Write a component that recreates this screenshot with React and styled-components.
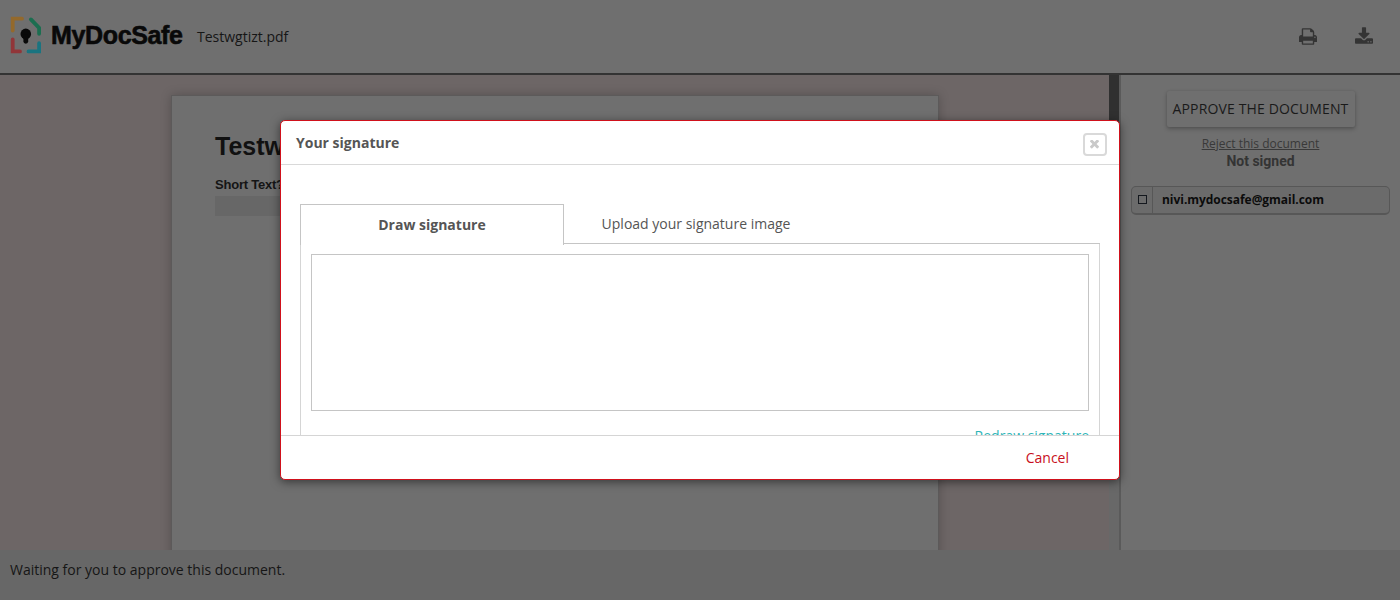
import React from 'react';
import styled, { createGlobalStyle } from 'styled-components';

const GlobalStyle = createGlobalStyle`
  * { box-sizing: border-box; }
  body { margin: 0; overflow: hidden; font-family: 'Open Sans', sans-serif; font-size: 14px; color: #161616; }
  button { font: inherit; cursor: pointer; }
`;

const Page = styled.div`
  height: 600px;
  display: flex;
  flex-direction: column;
  background: #6f6f6f;
`;

const Header = styled.header`
  height: 75px;
  flex: none;
  display: flex;
  align-items: center;
  padding: 0 27px 0 10px;
  border-bottom: 2px solid #333;
`;

const LogoMark = styled.svg`
  width: 32px;
  height: 38px;
  margin-top: -4px;
`;

const Brand = styled.span`
  width: 132px;
  margin: -3px 0 0 9px;
  font: bold 25px/30px 'Liberation Sans', sans-serif;
  letter-spacing: -0.35px;
  color: #090909;
  -webkit-text-stroke: 0.6px #090909;
  white-space: nowrap;
`;

const FileName = styled.span`
  margin-left: 14px;
  line-height: 20px;
`;

const Tools = styled.div`
  margin-left: auto;
  display: flex;
  gap: 38px;
  align-items: center;
`;

const ToolIcon = styled.svg`
  width: 18px;
  height: 17px;
  fill: #343434;
  margin-top: ${(p) => p.$shift}px;
`;

const Main = styled.main`
  flex: 1;
  min-height: 0;
  display: flex;
`;

const Viewer = styled.section`
  width: 1109px;
  padding: 20px 170px 0 171px;
  background: #6d6666;
  overflow: hidden;
`;

const Sheet = styled.article`
  height: 520px;
  padding: 34px 43px;
  background: #6f6f6f;
  border: 1px solid #5c5a5a;
  box-shadow: 0 0 10px rgba(0, 0, 0, 0.22);
  font-family: 'Liberation Sans', sans-serif;
`;

const SheetTitle = styled.h1`
  margin: 0;
  font-size: 25px;
  line-height: 33px;
  color: #111;
`;

const FieldLabel = styled.div`
  margin-top: 14px;
  font-size: 13px;
  letter-spacing: -0.22px;
  line-height: 16px;
  font-weight: bold;
  color: #151515;
`;

const Field = styled.div`
  height: 20px;
  margin-top: 3px;
  background: #676767;
`;

const ScrollTrack = styled.div`
  width: 10px;
  background: #686868;
`;

const ScrollThumb = styled.div`
  height: 330px;
  background: #303030;
`;

const Sidebar = styled.aside`
  flex: 1;
  display: flex;
  flex-direction: column;
  align-items: center;
  padding: 16px 10px 0;
  border-left: 2px solid #5a5a5a;
`;

const ApproveButton = styled.button`
  width: 188px;
  height: 36px;
  padding: 0 0 1px;
  border: 0;
  border-radius: 2px;
  background: #6f6f6f;
  color: #1a1a1a;
  letter-spacing: 0.14px;
  box-shadow: 0 2px 4px rgba(0, 0, 0, 0.25), 0 0 2px rgba(0, 0, 0, 0.1);
  white-space: nowrap;
`;

const RejectLink = styled.a`
  margin-top: 8px;
  font-size: 12px;
  line-height: 18px;
  color: #393939;
  text-decoration: underline;
`;

const Status = styled.div`
  font: bold 14px/16px Roboto, sans-serif;
  color: #343434;
`;

const Signer = styled.div`
  width: 259px;
  height: 29px;
  margin-top: 17px;
  display: flex;
  border: 1px solid #575757;
  border-bottom-width: 2px;
  border-radius: 5px;
  background: #6b6b6b;
`;

const SignerCheck = styled.div`
  width: 21px;
  display: flex;
  align-items: center;
  justify-content: center;
  padding: 0 0 1px;
  border-right: 1px solid #575757;
`;

const Box = styled.span`
  width: 9px;
  height: 9px;
  border: 1px solid #14181e;
`;

const SignerEmail = styled.span`
  padding-left: 9px;
  font-size: 12px;
  letter-spacing: -0.04px;
  line-height: 26px;
  font-weight: bold;
  color: #0b0b0b;
`;

const Footer = styled.footer`
  height: 50px;
  flex: none;
  padding: 10px;
  line-height: 20px;
  background: #676767;
`;

const Dialog = styled.div`
  position: absolute;
  left: 280px;
  top: 120px;
  width: 840px;
  height: 360px;
  display: flex;
  flex-direction: column;
  background: #fff;
  border: 1px solid #d0111b;
  border-radius: 5px;
  box-shadow: 0 2px 10px rgba(0, 0, 0, 0.5);
  color: #555;
  overflow: hidden;
`;

const DialogHeader = styled.div`
  height: 44px;
  flex: none;
  display: flex;
  justify-content: space-between;
  padding: 12px 12px 0 15px;
  border-bottom: 1px solid #d9d9d9;
  font-weight: bold;
  line-height: 20px;
`;

const CloseButton = styled.button`
  width: 24px;
  height: 23px;
  padding: 0 1px 0 0;
  display: flex;
  align-items: center;
  justify-content: center;
  border: 2px solid #d9d9d9;
  border-radius: 4px;
  background: #fff;
  svg { width: 9px; height: 9px; fill: #c9c9c9; }
`;

const DialogBody = styled.div`
  flex: 1;
  min-height: 0;
  overflow: hidden;
  padding: 39px 19px 0;
`;

const Tabs = styled.div`
  display: flex;
  align-items: flex-start;
  height: 40px;
`;

const Tab = styled.div`
  width: 264px;
  height: ${(p) => (p.$active ? 41 : 40)}px;
  flex: none;
  line-height: ${(p) => (p.$active ? 40 : 39)}px;
  text-align: center;
  font-weight: ${(p) => (p.$active ? 'bold' : 'normal')};
  border: ${(p) => (p.$active ? '1px solid #c5c5c5' : '0')};
  border-bottom: ${(p) => (p.$active ? '0' : '1px solid #c5c5c5')};
`;

const TabFill = styled.div`
  flex: 1;
  height: 40px;
  border-bottom: 1px solid #c5c5c5;
`;

const Panel = styled.div`
  height: 230px;
  padding: 10px;
  border: solid #d5d5d5;
  border-width: 0 1px;
`;

const Canvas = styled.div`
  height: 157px;
  border: 1px solid #c5c5c5;
`;

const Redraw = styled.div`
  margin-top: 15px;
  line-height: 20px;
  text-align: right;
  color: #2db5b8;
`;

const DialogFooter = styled.div`
  height: 44px;
  flex: none;
  padding: 12px 50px 0;
  border-top: 1px solid #d5d5d5;
  text-align: right;
  line-height: 20px;
  color: #c80f1c;
`;

export default function App() {
  return (
    <>
      <GlobalStyle />
      <Page>
        <Header>
          <LogoMark viewBox="10 15.5 32 38" fill="none" strokeWidth="3.8" strokeLinecap="round" strokeLinejoin="round">
            <path d="M12.7 30V18.2H22" stroke="#93692c" strokeLinejoin="miter" />
            <path d="M30.9 18.9 39.1 27.3V33.3" stroke="#1b6e50" />
            <path d="M12.7 39V50.9H20" stroke="#913639" strokeLinejoin="miter" />
            <path d="M39.1 42.7V50.9H28.5" stroke="#1a7480" strokeLinejoin="miter" />
            <circle cx="25.8" cy="33.4" r="5.3" fill="#090909" />
            <path d="M25.8 36V40.8" stroke="#090909" strokeWidth="4.8" />
          </LogoMark>
          <Brand>MyDocSafe</Brand>
          <FileName>Testwgtizt.pdf</FileName>
          <Tools>
            <ToolIcon viewBox="0 128 1664 1536" $shift={-1}>
              <path d="M384 1536h896v-256h-896v256zM384 896h896v-384h-160q-40 0-68-28t-28-68v-160h-640v640zM1536 960q0-26-19-45t-45-19-45 19-19 45 19 45 45 19 45-19 19-45zM1664 960v416q0 13-9.500 22.500t-22.500 9.500h-224v160q0 40-28 68t-68 28h-960q-40 0-68-28t-28-68v-160h-224q-13 0-22.500-9.500t-9.500-22.500v-416q0-79 56.500-135.500t135.500-56.500h64v-544q0-40 28-68t68-28h672q40 0 88 20t76 48l152 152q28 28 48 76t20 88v256h64q79 0 135.500 56.500t56.500 135.500z" />
            </ToolIcon>
            <ToolIcon viewBox="0 0 1664 1536" $shift={-3}>
              <path d="M1280 1344q0-26-19-45t-45-19-45 19-19 45 19 45 45 19 45-19 19-45zM1536 1344q0-26-19-45t-45-19-45 19-19 45 19 45 45 19 45-19 19-45zM1664 1120v320q0 40-28 68t-68 28h-1472q-40 0-68-28t-28-68v-320q0-40 28-68t68-28h465l135 136q58 56 136 56t136-56l136-136h464q40 0 68 28t28 68zM1339 551q17 41-14 70l-448 448q-18 19-45 19t-45-19l-448-448q-31-29-14-70 17-39 59-39h256v-448q0-26 19-45t45-19h256q26 0 45 19t19 45v448h256q42 0 59 39z" />
            </ToolIcon>
          </Tools>
        </Header>
        <Main>
          <Viewer>
            <Sheet>
              <SheetTitle>Testwgtizt</SheetTitle>
              <FieldLabel>Short Text?</FieldLabel>
              <Field />
            </Sheet>
          </Viewer>
          <ScrollTrack>
            <ScrollThumb />
          </ScrollTrack>
          <Sidebar>
            <ApproveButton>APPROVE THE DOCUMENT</ApproveButton>
            <RejectLink>Reject this document</RejectLink>
            <Status>Not signed</Status>
            <Signer>
              <SignerCheck><Box /></SignerCheck>
              <SignerEmail>nivi.mydocsafe@gmail.com</SignerEmail>
            </Signer>
          </Sidebar>
        </Main>
        <Footer>Waiting for you to approve this document.</Footer>
      </Page>
      <Dialog role="dialog">
        <DialogHeader>
          Your signature
          <CloseButton aria-label="Close">
            <svg viewBox="110 434 1188 1188">
              <path d="M1298 1322q0 40-28 68l-136 136q-28 28-68 28t-68-28l-294-294-294 294q-28 28-68 28t-68-28l-136-136q-28-28-28-68t28-68l294-294-294-294q-28-28-28-68t28-68l136-136q28-28 68-28t68 28l294 294 294-294q28-28 68-28t68 28l136 136q28 28 28 68t-28 68l-294 294 294 294q28 28 28 68z" />
            </svg>
          </CloseButton>
        </DialogHeader>
        <DialogBody>
          <Tabs>
            <Tab $active>Draw signature</Tab>
            <Tab>Upload your signature image</Tab>
            <TabFill />
          </Tabs>
          <Panel>
            <Canvas />
            <Redraw>Redraw signature</Redraw>
          </Panel>
        </DialogBody>
        <DialogFooter>Cancel</DialogFooter>
      </Dialog>
    </>
  );
}
